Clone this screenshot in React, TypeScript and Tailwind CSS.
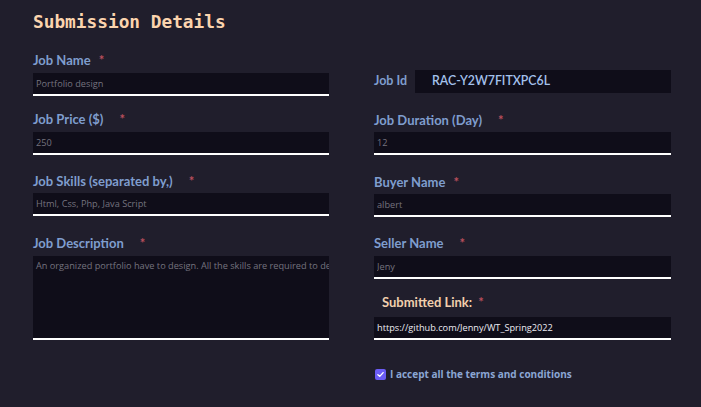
import React from "react";

const labelFont = { fontFamily: "Lato, 'Open Sans', sans-serif" };
const inputFont = { fontFamily: "'Open Sans', 'Noto Sans', sans-serif" };

function Label({ text, gap = "ml-2", className = "" }: { text: string; gap?: string; className?: string }) {
  return (
    <div
      className={`flex h-[20px] items-center pb-[3px] text-[13px] font-bold leading-[17px] text-[#7f9dce] ${className}`}
      style={labelFont}
    >
      <span>{text}</span>
      <span className={`${gap} text-[13px] text-[#b94f5c]`}>*</span>
    </div>
  );
}

function Input({ value, light = false }: { value: string; light?: boolean }) {
  return (
    <input
      readOnly
      defaultValue={value}
      className={`block h-[23px] w-full border-b-2 border-white bg-[#0f0d19] px-[3px] text-[9.2px] outline-none ${
        light ? "text-[#ecebf2]" : "text-[#75737f]"
      }`}
      style={inputFont}
    />
  );
}

export default function App() {
  return (
    <main className="h-[407px] w-[701px] overflow-hidden bg-[#201e2c] pl-[33px] pt-[10px]">
      <h1
        className="text-[17.8px] font-bold leading-[24px] text-[#fbd4ae]"
        style={{ fontFamily: "'DejaVu Sans Mono', 'Liberation Mono', monospace" }}
      >
        Submission Details
      </h1>

      <div className="mt-[18px] flex gap-[45px]">
        {/* left column */}
        <div className="flex w-[296px] shrink-0 flex-col">
          <Label text="Job Name" />
          <div className="mt-[1px]">
            <Input value="Portfolio design" />
          </div>

          <Label text="Job Price ($)" gap="ml-4" className="mt-[15px]" />
          <div className="mt-[1px]">
            <Input value="250" />
          </div>

          <Label text="Job Skills (separated by,)" gap="ml-4" className="mt-[18px]" />
          <div>
            <Input value="Html, Css, Php, Java Script" />
          </div>

          <Label text="Job Description" gap="ml-4" className="mt-[19px]" />
          <textarea
            readOnly
            wrap="off"
            defaultValue="An organized portfolio have to design. All the skills are required to design this portfolio properly."
            className="mt-[1px] block h-[84px] w-full resize-none overflow-hidden border-b-2 border-white bg-[#0f0d19] px-[3px] pt-[3px] text-[9.2px] text-[#75737f] outline-none"
            style={inputFont}
          />
        </div>

        {/* right column */}
        <div className="flex w-[297px] shrink-0 flex-col">
          <div className="mt-[18px] flex items-center">
            <span className="w-[41px] text-[12.5px] font-bold text-[#7f9dce]" style={labelFont}>
              Job Id
            </span>
            <div
              className="flex h-[23px] flex-1 items-center bg-[#0f0d19] pl-[17px] text-[12.3px] font-semibold text-[#a4c1ec]"
              style={labelFont}
            >
              RAC-Y2W7FITXPC6L
            </div>
          </div>

          <Label text="Job Duration (Day)" gap="ml-4" className="mt-[19px]" />
          <div>
            <Input value="12" />
          </div>

          <Label text="Buyer Name" className="mt-[19px]" />
          <div>
            <Input value="albert" />
          </div>

          <Label text="Seller Name" gap="ml-4" className="mt-[18px]" />
          <div className="mt-[1px]">
            <Input value="Jeny" />
          </div>

          <div
            className="mt-[14px] flex h-[20px] items-center pl-[8px] text-[13px] font-bold text-[#f1cfae]"
            style={labelFont}
          >
            <span>Submitted Link:</span>
            <span className="ml-[6px] text-[13px] text-[#b94f5c]">*</span>
          </div>
          <div className="mt-[4px]">
            <Input value="https://github.com/Jenny/WT_Spring2022" light />
          </div>

          <label className="mt-[27px] flex items-center gap-[4px] pl-[1px]">
            <span className="flex h-[11px] w-[11px] items-center justify-center rounded-[2px] bg-[#6b5cf4]">
              <svg viewBox="0 0 12 12" className="h-[9px] w-[9px]">
                <path d="M2.5 6.2 L5 8.5 L9.5 3.5" fill="none" stroke="white" strokeWidth="1.8" strokeLinecap="round" strokeLinejoin="round" />
              </svg>
            </span>
            <span className="text-[10px] font-bold text-[#8ba6d4]" style={inputFont}>
              I accept all the terms and conditions
            </span>
          </label>
        </div>
      </div>
    </main>
  );
}
